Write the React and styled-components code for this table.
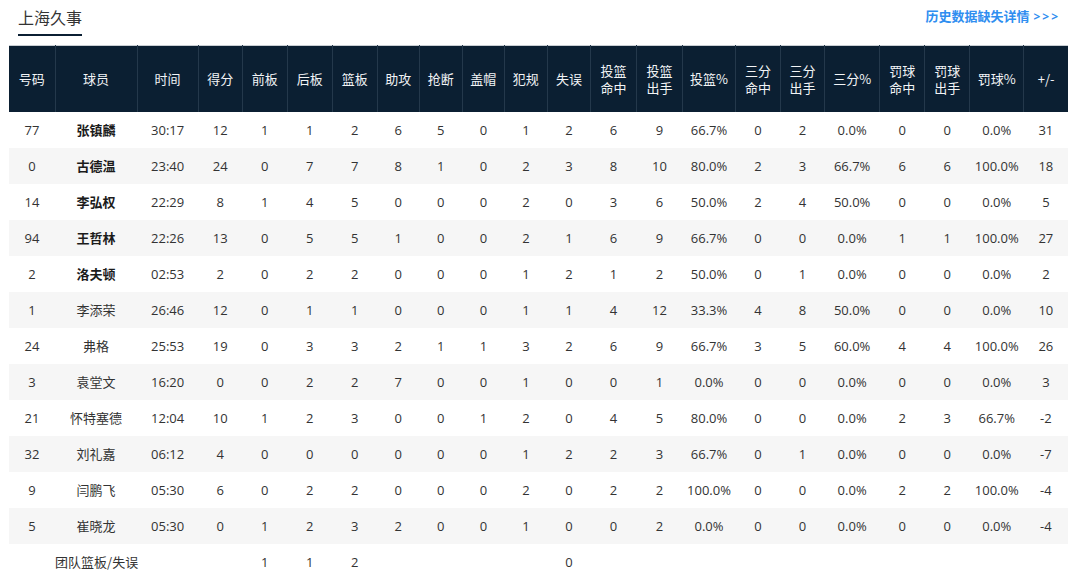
import React from "react";
import styled, { createGlobalStyle } from "styled-components";

const Global = createGlobalStyle`
  html, body { margin: 0; padding: 0; background: #fff; }
  body { font-family: "Open Sans", "Noto Sans CJK SC", sans-serif; color: #333; }
`;

const Page = styled.div`
  padding: 0 12px 0 9px;
  width: 1080px;
  box-sizing: border-box;
  overflow: hidden;
  height: 570px;
`;

const TopBar = styled.div`
  display: flex;
  justify-content: space-between;
  align-items: flex-start;
  height: 36px;
  margin-bottom: 9px;
  padding: 0 8px 0 9px;
`;

const Title = styled.div`
  font-family: "Noto Sans CJK SC", sans-serif;
  font-size: 16px;
  line-height: 20px;
  padding-top: 7px;
  color: #333;
  border-bottom: 2px solid #0b1f33;
  box-sizing: border-box;
  height: 36px;
`;

const MoreLink = styled.a`
  font-family: "Noto Sans CJK SC", sans-serif;
  font-size: 13px;
  font-weight: 700;
  color: #2f8ef0;
  text-decoration: none;
  line-height: 20px;
  padding-top: 6px;
  white-space: nowrap;
`;

const Arrows = styled.span`
  font-family: "Open Sans", sans-serif;
  font-size: 12px;
  letter-spacing: 2px;
  margin-left: 4px;
`;

const Table = styled.table`
  width: 1059px;
  border-collapse: collapse;
  table-layout: fixed;
  border-top: 1px solid #c9ced3;
`;

const HeadRow = styled.tr`
  background: #0b1f32;
  height: 66px;
`;

const HeadCell = styled.th`
  font-family: "Noto Sans CJK SC", sans-serif;
  font-weight: 400;
  font-size: 13px;
  line-height: 17px;
  color: #f2f4f6;
  text-align: center;
  padding: 0;
  border-right: 1px solid #24384b;
  &:last-child { border-right: none; }
`;

const Row = styled.tr`
  height: 36px;
  background: ${(p) => (p.$alt ? "#f6f6f6" : "#fff")};
`;

const Cell = styled.td`
  font-size: 13px;
  text-align: center;
  padding: 0;
  color: ${(p) => (p.$bold ? "#1b1b1b" : "#333")};
  font-weight: ${(p) => (p.$bold ? 700 : 400)};
  font-family: ${(p) => (p.$cjk ? '"Noto Sans CJK SC", sans-serif' : '"Open Sans", "Noto Sans CJK SC", sans-serif')};
  white-space: nowrap;
  overflow: visible;
`;

const cols = [
  ["号码", 46], ["球员", 82], ["时间", 61], ["得分", 44], ["前板", 45], ["后板", 45],
  ["篮板", 45], ["助攻", 42], ["抢断", 43], ["盖帽", 42], ["犯规", 43], ["失误", 43],
  ["投篮\n命中", 46], ["投篮\n出手", 46], ["投篮%", 53], ["三分\n命中", 45], ["三分\n出手", 44],
  ["三分%", 55], ["罚球\n命中", 45], ["罚球\n出手", 45], ["罚球%", 54], ["+/-", 44],
];

const rows = [
  ["77", "张镇麟", "30:17", 12, 1, 1, 2, 6, 5, 0, 1, 2, 6, 9, "66.7%", 0, 2, "0.0%", 0, 0, "0.0%", 31, true],
  ["0", "古德温", "23:40", 24, 0, 7, 7, 8, 1, 0, 2, 3, 8, 10, "80.0%", 2, 3, "66.7%", 6, 6, "100.0%", 18, true],
  ["14", "李弘权", "22:29", 8, 1, 4, 5, 0, 0, 0, 2, 0, 3, 6, "50.0%", 2, 4, "50.0%", 0, 0, "0.0%", 5, true],
  ["94", "王哲林", "22:26", 13, 0, 5, 5, 1, 0, 0, 2, 1, 6, 9, "66.7%", 0, 0, "0.0%", 1, 1, "100.0%", 27, true],
  ["2", "洛夫顿", "02:53", 2, 0, 2, 2, 0, 0, 0, 1, 2, 1, 2, "50.0%", 0, 1, "0.0%", 0, 0, "0.0%", 2, true],
  ["1", "李添荣", "26:46", 12, 0, 1, 1, 0, 0, 0, 1, 1, 4, 12, "33.3%", 4, 8, "50.0%", 0, 0, "0.0%", 10, false],
  ["24", "弗格", "25:53", 19, 0, 3, 3, 2, 1, 1, 3, 2, 6, 9, "66.7%", 3, 5, "60.0%", 4, 4, "100.0%", 26, false],
  ["3", "袁堂文", "16:20", 0, 0, 2, 2, 7, 0, 0, 1, 0, 0, 1, "0.0%", 0, 0, "0.0%", 0, 0, "0.0%", 3, false],
  ["21", "怀特塞德", "12:04", 10, 1, 2, 3, 0, 0, 1, 2, 0, 4, 5, "80.0%", 0, 0, "0.0%", 2, 3, "66.7%", -2, false],
  ["32", "刘礼嘉", "06:12", 4, 0, 0, 0, 0, 0, 0, 1, 2, 2, 3, "66.7%", 0, 1, "0.0%", 0, 0, "0.0%", -7, false],
  ["9", "闫鹏飞", "05:30", 6, 0, 2, 2, 0, 0, 0, 2, 0, 2, 2, "100.0%", 0, 0, "0.0%", 2, 2, "100.0%", -4, false],
  ["5", "崔晓龙", "05:30", 0, 1, 2, 3, 2, 0, 0, 1, 0, 0, 2, "0.0%", 0, 0, "0.0%", 0, 0, "0.0%", -4, false],
];

const team = ["", "团队篮板/失误", "", "", 1, 1, 2, "", "", "", "", 0, "", "", "", "", "", "", "", "", "", ""];

export default function App() {
  return (
    <Page>
      <Global />
      <TopBar>
        <Title>上海久事</Title>
        <MoreLink href="#">
          历史数据缺失详情<Arrows>&gt;&gt;&gt;</Arrows>
        </MoreLink>
      </TopBar>
      <Table>
        <colgroup>
          {cols.map(([, w], i) => (
            <col key={i} style={{ width: w }} />
          ))}
        </colgroup>
        <thead>
          <HeadRow>
            {cols.map(([label], i) => (
              <HeadCell key={i}>
                {label.split("\n").map((l, j) => (
                  <div key={j}>{l}</div>
                ))}
              </HeadCell>
            ))}
          </HeadRow>
        </thead>
        <tbody>
          {rows.map((r, i) => (
            <Row key={i} $alt={i % 2 === 1}>
              {r.slice(0, 22).map((v, j) => (
                <Cell key={j} $bold={j === 1 && r[22]} $cjk={j === 1}>
                  {v}
                </Cell>
              ))}
            </Row>
          ))}
          <Row $alt={false}>
            {team.map((v, j) => (
              <Cell key={j} $cjk={j === 1}>
                {v}
              </Cell>
            ))}
          </Row>
        </tbody>
      </Table>
    </Page>
  );
}
